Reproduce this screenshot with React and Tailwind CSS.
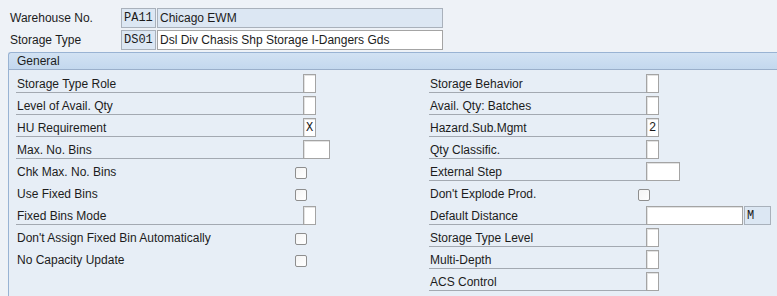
import React from "react";

const left = [
  { label: "Storage Type Role", type: "input", w: 13 },
  { label: "Level of Avail. Qty", type: "input", w: 13 },
  { label: "HU Requirement", type: "input", w: 13, value: "X" },
  { label: "Max. No. Bins", type: "input", w: 27 },
  { label: "Chk Max. No. Bins", type: "check" },
  { label: "Use Fixed Bins", type: "check" },
  { label: "Fixed Bins Mode", type: "input", w: 13 },
  { label: "Don't Assign Fixed Bin Automatically", type: "check" },
  { label: "No Capacity Update", type: "check" },
];

const right = [
  { label: "Storage Behavior", type: "input", w: 13 },
  { label: "Avail. Qty: Batches", type: "input", w: 13 },
  { label: "Hazard.Sub.Mgmt", type: "input", w: 13, value: "2" },
  { label: "Qty Classific.", type: "input", w: 13 },
  { label: "External Step", type: "input", w: 34 },
  { label: "Don't Explode Prod.", type: "check" },
  { label: "Default Distance", type: "input", w: 97, unit: "M" },
  { label: "Storage Type Level", type: "input", w: 13 },
  { label: "Multi-Depth", type: "input", w: 13 },
  { label: "ACS Control", type: "input", w: 13 },
];

const mono = { fontFamily: '"Liberation Mono", monospace' };

const Field = ({ w, value, readOnly }) => (
  <div
    className={`h-[19px] shrink-0 border flex items-center pl-[2px] text-[12px] text-[#1a1a1a] ${
      readOnly ? "bg-[#dce7f3] border-[#a9b1bb]" : "bg-white border-[#a4a4a4] shadow-[inset_1px_1px_0_#e2e2e2]"
    }`}
    style={{ width: w, ...mono }}
  >
    {value}
  </div>
);

const Check = () => (
  <div className="w-[12px] h-[12px] mt-[8px] shrink-0 rounded-[2px] border border-[#8e8e8e] bg-gradient-to-br from-[#f4f4f4] to-white" />
);

const Row = ({ row, labelW }) => {
  if (row.type === "check") {
    return (
      <div className="flex h-[22px] items-start">
        <div className="h-[22px] flex items-end leading-[13px] pb-[2px] pl-[1px]" style={{ width: labelW - 8 }}>
          {row.label}
        </div>
        <Check />
      </div>
    );
  }
  return (
    <div className="flex h-[22px] items-end">
      <div
        className="h-[22px] flex items-end leading-[13px] pb-[1px] pl-[1px] border-b border-[#a3a9b1]"
        style={{ width: labelW }}
      >
        {row.label}
      </div>
      <Field w={row.w} value={row.value} />
      {row.unit && (
        <div className="ml-[1px]">
          <Field w={27} value={row.unit} readOnly />
        </div>
      )}
    </div>
  );
};

export default function App() {
  return (
    <div
      className="w-[777px] h-[296px] overflow-hidden bg-[#eef2f7] text-[12px] text-[#1c1c1c]"
      style={{ fontFamily: '"Liberation Sans", Arial, sans-serif' }}
    >
      <div className="pl-[10px] pt-[8px] flex flex-col gap-[2px]">
        <div className="flex h-[20px] items-center">
          <div className="w-[111px]">Warehouse No.</div>
          <div className="h-[20px] w-[35px] border border-[#a9b1bb] bg-[#dce7f3] flex items-center pl-[2px]" style={mono}>
            PA11
          </div>
          <div className="h-[20px] w-[286px] ml-[1px] border border-[#a9b1bb] bg-[#dce7f3] flex items-center pl-[2px]">
            Chicago EWM
          </div>
        </div>
        <div className="flex h-[20px] items-center">
          <div className="w-[111px]">Storage Type</div>
          <div className="h-[20px] w-[35px] border border-[#a9b1bb] bg-[#dce7f3] flex items-center pl-[2px]" style={mono}>
            DS01
          </div>
          <div className="h-[20px] w-[286px] ml-[1px] border border-[#a4a4a4] bg-white flex items-center pl-[2px]">
            Dsl Div Chasis Shp Storage I-Dangers Gds
          </div>
        </div>
      </div>

      <div className="ml-[8px] mt-[2px]">
        <div className="h-[18px] border-t border-l border-b border-t-[#99b3d3] border-l-[#99b3d3] border-b-[#9aafca] rounded-tl-[3px] bg-gradient-to-b from-[#d2e2f3] to-[#c3d8ee] flex items-center pl-[8px]">
          General
        </div>
        <div className="h-[300px] border-l border-[#99b3d3] bg-[#e7eef6] pt-[1px] pl-[7px] flex">
          <div className="w-[413px] shrink-0 flex flex-col">
            {left.map((r) => (
              <Row key={r.label} row={r} labelW={287} />
            ))}
          </div>
          <div className="flex flex-col">
            {right.map((r) => (
              <Row key={r.label} row={r} labelW={217} />
            ))}
          </div>
        </div>
      </div>
    </div>
  );
}
